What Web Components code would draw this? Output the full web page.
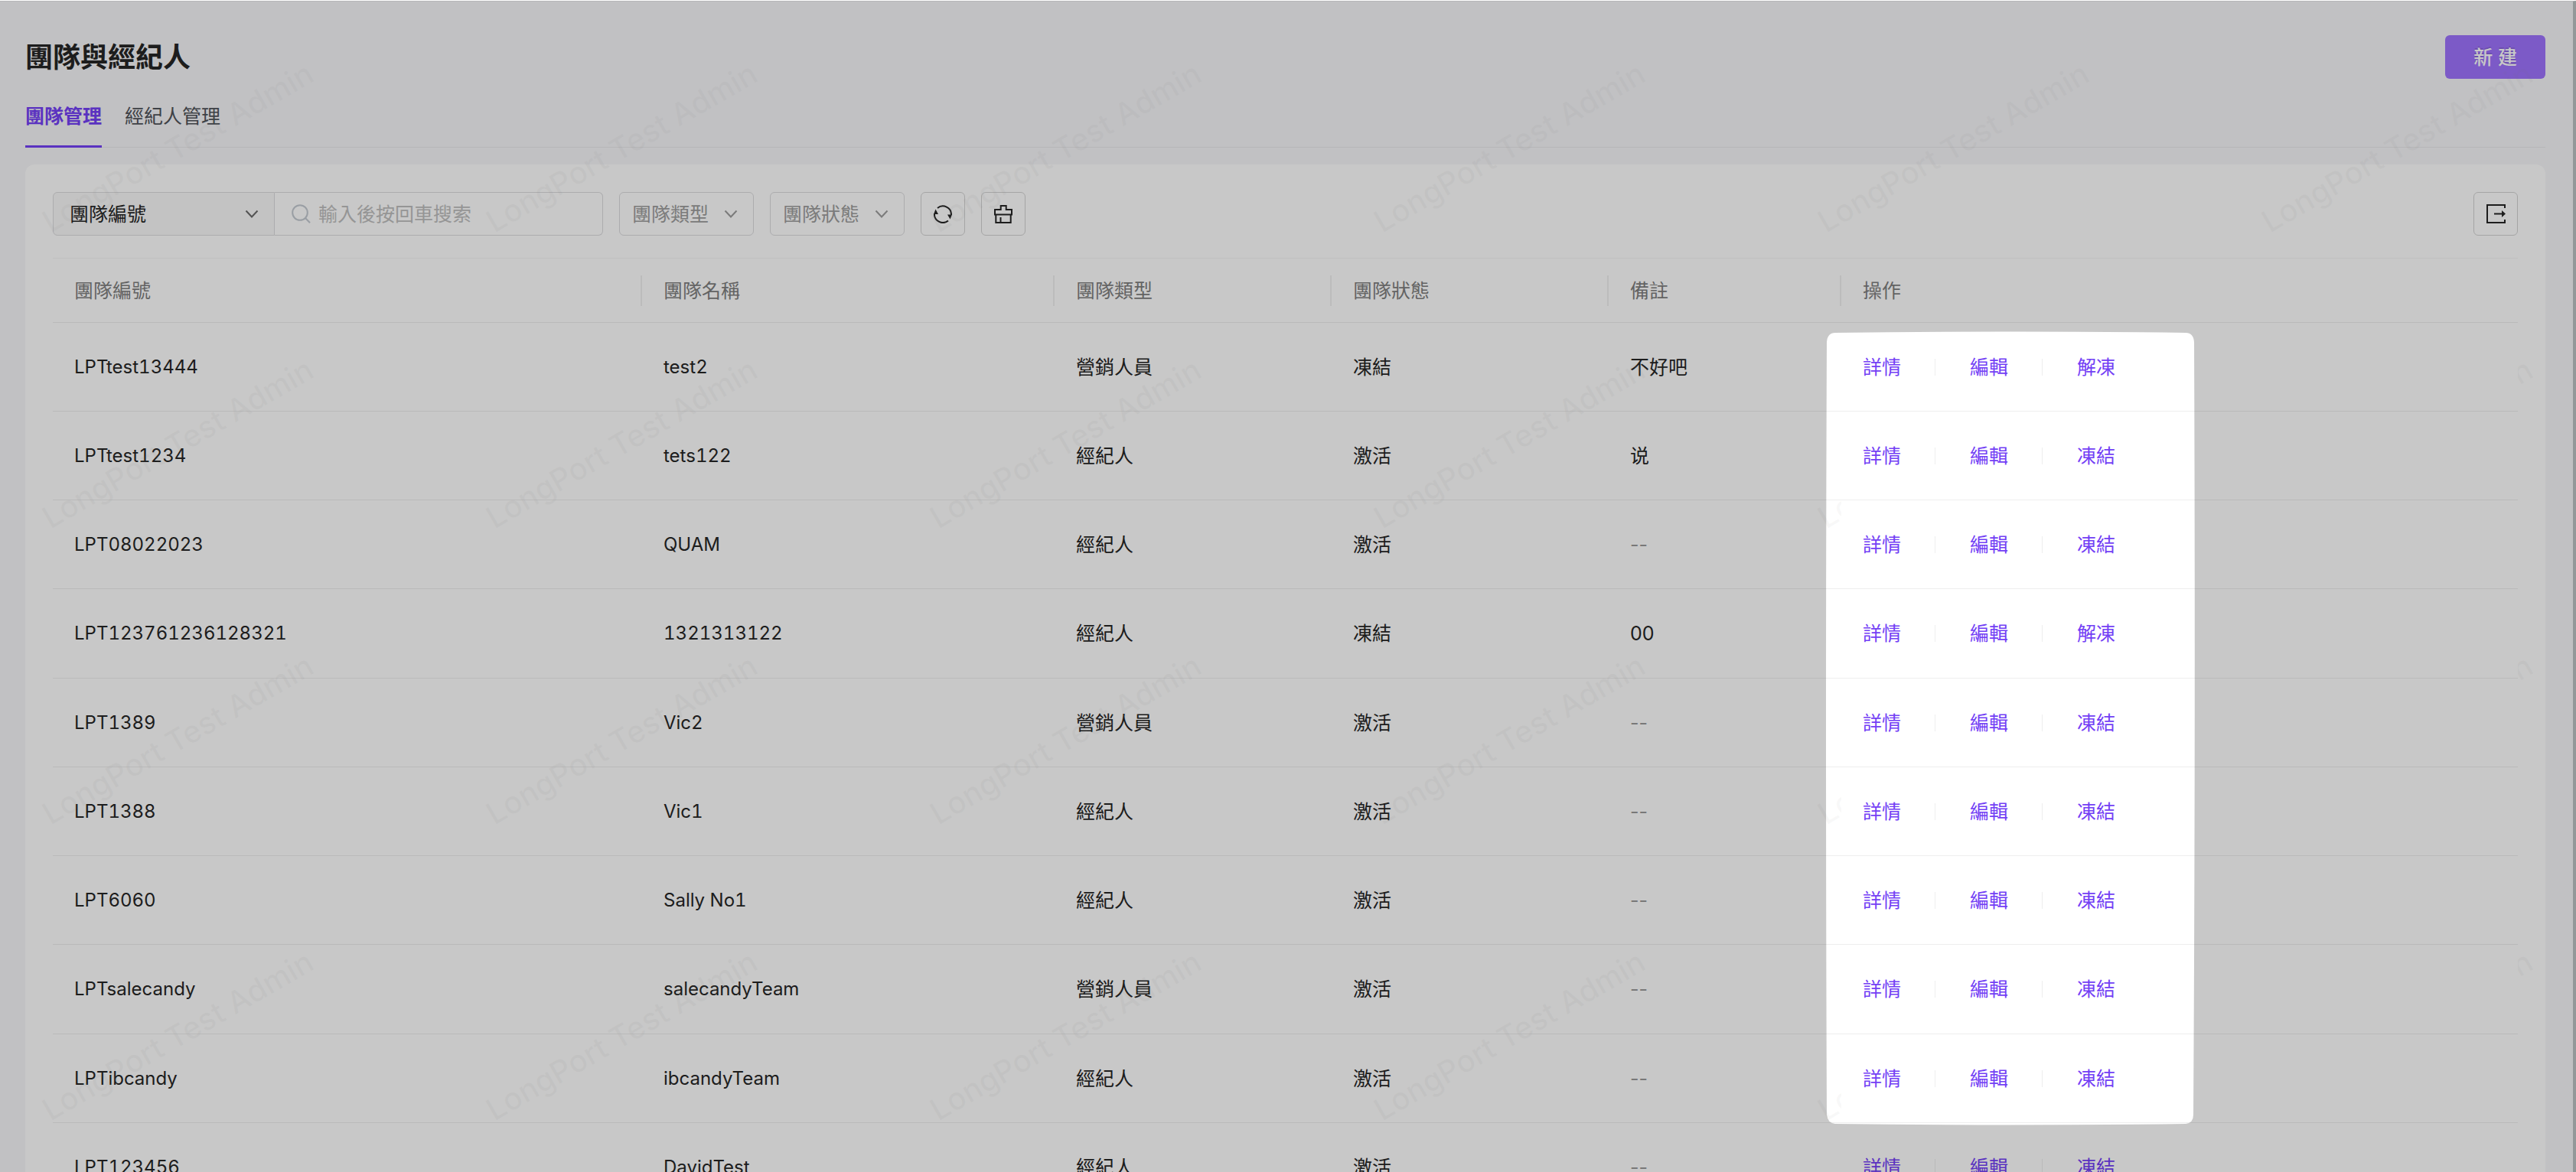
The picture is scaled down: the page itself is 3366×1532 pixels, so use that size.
<!DOCTYPE html>
<html lang="zh-Hant">
<head>
<meta charset="utf-8">
<title>團隊與經紀人</title>
<style>
  html, body { margin: 0; height: 100%; overflow: hidden; }
  body {
    --ink: #262626; --muted: #7f7f7f; --line: #eeeeee; --edge: #dcdcde; --brand: #7340f5;
    font: 25px/36px Inter, "Noto Sans CJK TC", sans-serif;
    color: var(--ink); background: #f6f6f9;
  }
</style>
</head>
<body>
<lp-app>
  <lp-page-header heading="團隊與經紀人"><lp-primary-button>新 建</lp-primary-button></lp-page-header>
  <lp-tabs></lp-tabs>
  <lp-card>
    <lp-filter-bar></lp-filter-bar>
    <lp-team-table></lp-team-table>
  </lp-card>
  <lp-watermark slot="over" text="LongPort Test Admin"></lp-watermark>
  <lp-spotlight slot="over"></lp-spotlight>
</lp-app>
<script>
const define = (name, render) => customElements.define(name, class extends HTMLElement {
  connectedCallback() {
    if (this.shadowRoot) return;
    this.attachShadow({ mode: 'open' }).innerHTML = render(this);
  }
});

const chevron = '<svg class="chev" width="18" height="12" viewBox="0 0 18 12" fill="none" stroke="currentColor" stroke-width="2" aria-hidden="true"><path d="M1.5 1.5 9 9.5l7.5-8"/></svg>';

define('lp-app', () => `
  <style>
    :host { display: block; position: relative; height: 100vh; overflow: hidden; box-sizing: border-box;
      border-top: 1px solid #fff; }
    main { border-top: 1px solid #e9e9eb; border-right: 4px solid #bcc2c4; padding: 44px 36px 0 33px; min-height: 100vh; box-sizing: border-box; }
  </style>
  <main><slot></slot></main><slot name="over"></slot>`);

define('lp-page-header', el => `
  <style>
    :host { display: flex; justify-content: space-between; align-items: center; }
    h1 { margin: 0; font-size: 36px; line-height: 48px; font-weight: 600; }
  </style>
  <h1>${el.getAttribute('heading')}</h1><slot></slot>`);

define('lp-primary-button', () => `
  <style>
    :host { display: block; }
    button { height: 57px; padding: 0 37px; border: 0; border-radius: 6px; background: #9e73fe; color: #fff;
      font: inherit; font-weight: 500; text-shadow: 0 -2px 0 rgba(0,0,0,.12); }
  </style>
  <button type="button"><slot></slot></button>`);

define('lp-tabs', () => `
  <style>
    :host { display: block; margin-bottom: 22px; }
    nav { display: flex; gap: 30px; border-bottom: 1px solid #e9e9eb; padding-top: 31px; }
    a { color: #50545a; text-decoration: none; padding-bottom: 20px; border-bottom: 3px solid transparent; margin-bottom: -1px; }
    a[aria-current] { color: var(--brand); font-weight: 600; border-color: var(--brand); }
  </style>
  <nav><a href="#teams" aria-current="page">團隊管理</a><a href="#brokers">經紀人管理</a></nav>`);

define('lp-card', () => `
  <style>:host { display: block; background: #fff; border-radius: 12px; padding: 36px; }</style>
  <slot></slot>`);

define('lp-select', el => `
  <style>
    :host { display: block; position: relative; box-sizing: border-box; height: 57px; color: #9d9d9d; border: 1px solid var(--edge); border-radius: 6px; }
    :host([filled]) { color: var(--ink); background: #f9f9f9; border-radius: 6px 0 0 6px; }
    select { appearance: none; width: 100%; height: 100%; border: 0; background: none; padding: 0 44px 0 16px; margin: 0;
      font: inherit; color: inherit; }
    :host([filled]) select { padding-left: 21px; }
    .chev { position: absolute; right: 20px; top: 22px; pointer-events: none; }
    :host([filled]) .chev { color: #6a6a6a; }
  </style>
  <select aria-label="${el.getAttribute('label')}"><option>${el.getAttribute('label')}</option></select>${chevron}`);

define('lp-icon-button', el => `
  <style>
    :host { display: block; }
    button { display: grid; place-items: center; width: 58px; height: 57px; padding: 0; border: 1px solid #d3d3d3; border-radius: 6px;
      background: none; color: var(--ink); }
  </style>
  <button type="button" aria-label="${el.getAttribute('label')}"><slot></slot></button>`);

define('lp-filter-bar', () => `
  <style>
    :host { display: flex; align-items: center; gap: 21px; margin-bottom: 29px; }
    .group { display: flex; width: 719px; }
    .group lp-select { flex: none; width: 290px; }
    label { flex: 1; min-width: 0; display: flex; align-items: center; gap: 10px; height: 57px; box-sizing: border-box; padding: 0 22px;
      border: 1px solid var(--edge); border-left: 0; border-radius: 0 6px 6px 0; color: #c4cad1; }
    label svg { flex: none; }
    input { flex: 1; min-width: 0; border: 0; padding: 0; background: none; font: inherit; color: var(--ink); outline: 0; }
    input::placeholder { color: #bfbfbf; opacity: 1; }
    .pick { width: 176px; }
    .end { margin-left: auto; }
  </style>
  <div class="group">
    <lp-select filled label="團隊編號"></lp-select>
    <label>
      <svg width="25" height="25" viewBox="0 0 25 25" fill="none" stroke="currentColor" stroke-width="2" aria-hidden="true"><circle cx="11" cy="11" r="9.8"/><path d="m18 18 6 6.3"/></svg>
      <input type="text" placeholder="輸入後按回車搜索" aria-label="搜索">
    </label>
  </div>
  <lp-select class="pick" label="團隊類型"></lp-select>
  <lp-select class="pick" label="團隊狀態"></lp-select>
  <lp-icon-button label="刷新">
    <svg width="24" height="24" viewBox="0 0 24 24" fill="none" stroke="currentColor" stroke-width="2"><path d="M5 4A11 11 0 0 1 23 13M19 20.400A11 11 0 0 1 1 11"/><path fill="currentColor" stroke="none" d="M2.500 5.500 6 12H0zM21.500 18.500 18 12.500h6z"/></svg>
  </lp-icon-button>
  <lp-icon-button label="清空">
    <svg width="24" height="24" viewBox="0 0 24 24" fill="none" stroke="currentColor" stroke-width="2"><path d="M1 12.500V6h7.700V1h7V6H23v6.500zM2.300 12.500V23h19.400V12.500M8.500 23v-7"/></svg>
  </lp-icon-button>
  <lp-icon-button class="end" label="導出">
    <svg width="25" height="25" viewBox="0 0 25 25" fill="none" stroke="currentColor" stroke-width="2"><path d="M24 5V1H1v23h23v-4M10 12.500h11"/><path fill="currentColor" stroke="none" d="m20 8 5 4.500-5 4.500z"/></svg>
  </lp-icon-button>`);

define('lp-row-actions', el => `
  <style>
    :host { display: flex; align-items: center; }
    a { color: var(--brand); text-decoration: none; }
    i { width: 1px; height: 22px; background: var(--line); margin: 0 45px 0 44px; }
  </style>
  <a href="#detail">詳情</a><i></i><a href="#edit">編輯</a><i></i><a href="#toggle">${el.getAttribute('toggle')}</a>`);

const rows = [
  ['LPTtest13444', 'test2', '營銷人員', '凍結', '不好吧'],
  ['LPTtest1234', 'tets122', '經紀人', '激活', '说'],
  ['LPT08022023', 'QUAM', '經紀人', '激活', ''],
  ['LPT123761236128321', '1321313122', '經紀人', '凍結', '00'],
  ['LPT1389', 'Vic2', '營銷人員', '激活', ''],
  ['LPT1388', 'Vic1', '經紀人', '激活', ''],
  ['LPT6060', 'Sally No1', '經紀人', '激活', ''],
  ['LPTsalecandy', 'salecandyTeam', '營銷人員', '激活', ''],
  ['LPTibcandy', 'ibcandyTeam', '經紀人', '激活', ''],
  ['LPT123456', 'DavidTest', '經紀人', '激活', '']
];

define('lp-team-table', () => `
  <style>
    :host { display: block; }
    table { width: 100%; table-layout: fixed; border-collapse: separate; border-spacing: 0; }
    .c1 { width: 770px; } .c2 { width: 539px; } .c3, .c4 { width: 362px; } .c5 { width: 304px; }
    th, td { box-sizing: border-box; padding: 0 28px; text-align: left; font-weight: 400; border-bottom: 1px solid var(--line); }
    th { height: 85px; color: var(--muted); border-top: 1px solid #f5f5f5;
      background: linear-gradient(#f0f0f0, #f0f0f0) right center / 2px 40px no-repeat; }
    th:last-child { background: none; }
    td { height: 116px; }
    tr:nth-child(4n) td { height: 117px; }
    td:nth-child(-n+2) { font-size: 24px; font-variant-numeric: tabular-nums; }
    td:last-child { position: relative; z-index: 2; background: #fff; }
    .none { color: #999; }
  </style>
  <table>
    <colgroup><col class="c1"><col class="c2"><col class="c3"><col class="c4"><col class="c5"><col></colgroup>
    <thead><tr>${['團隊編號', '團隊名稱', '團隊類型', '團隊狀態', '備註', '操作'].map(h => `<th scope="col">${h}</th>`).join('')}</tr></thead>
    <tbody>${rows.map(r => `<tr>${r.map(c => c ? `<td>${c}</td>` : '<td class="none">--</td>').join('')}<td><lp-row-actions toggle="${r[3] === '凍結' ? '解凍' : '凍結'}"></lp-row-actions></td></tr>`).join('')}</tbody>
  </table>`);

define('lp-watermark', el => {
  let marks = '';
  for (let y = 304; y < 1800; y += 387)
    for (let x = 66; x < 3400; x += 580)
      marks += `<text transform="translate(${x} ${y}) rotate(-30)">${el.getAttribute('text')}</text>`;
  return `
  <style>
    :host { position: absolute; inset: 0; z-index: 1; pointer-events: none; }
    svg { display: block; width: 100%; height: 100%; }
    text { font: 500 40px Inter, sans-serif; fill: rgba(150,150,150,.06); }
  </style>
  <svg aria-hidden="true">${marks}</svg>`;
});

/* Dims the whole page except the actions column; the edges of the opening bow out slightly. */
define('lp-spotlight', () => `
  <style>
    :host { position: absolute; left: 2386px; top: 432px; width: 482px; height: 1038px; z-index: 3; pointer-events: none; }
    svg { display: block; overflow: visible; }
  </style>
  <svg width="482" height="1038" aria-hidden="true"><path fill="rgba(0,0,0,.216)" fill-rule="evenodd" d="M-4000-2000H6000V4000H-4000Z
    M12 2Q241-1 470 2Q480 2 481 14Q483 519 480 1024Q480 1035 470 1036Q241 1039 12 1036Q2 1035 1 1024Q-1 519 1 14Q2 2 12 2Z"/></svg>`);
</script>
</body>
</html>
